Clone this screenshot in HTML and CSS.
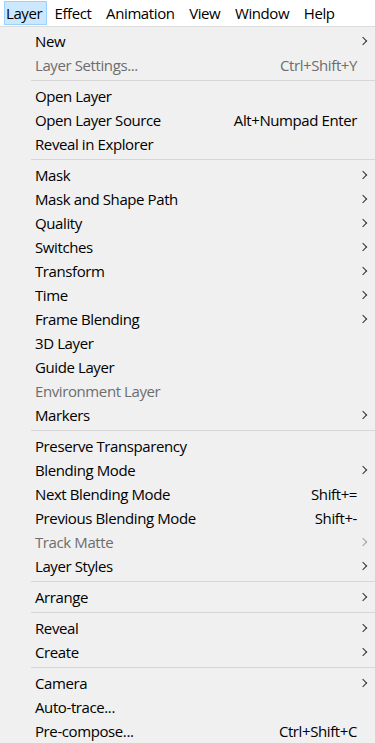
FILE: index.html
```html
<!DOCTYPE html>
<html>
<head>
<meta charset="utf-8">
<link rel="stylesheet" href="styles.css">
</head>
<body>
<div class="menubar">
  <span class="top active">Layer</span>
  <span class="top">Effect</span>
  <span class="top">Animation</span>
  <span class="top">View</span>
  <span class="top">Window</span>
  <span class="top">Help</span>
</div>
<div class="menu">
  <div class="item"><span class="label">New</span><span class="arrow"></span></div>
  <div class="item disabled"><span class="label">Layer Settings...</span><span class="key">Ctrl+Shift+Y</span></div>
  <div class="sep"></div>
  <div class="item"><span class="label">Open Layer</span></div>
  <div class="item"><span class="label">Open Layer Source</span><span class="key">Alt+Numpad Enter</span></div>
  <div class="item"><span class="label">Reveal in Explorer</span></div>
  <div class="sep"></div>
  <div class="item"><span class="label">Mask</span><span class="arrow"></span></div>
  <div class="item"><span class="label">Mask and Shape Path</span><span class="arrow"></span></div>
  <div class="item"><span class="label">Quality</span><span class="arrow"></span></div>
  <div class="item"><span class="label">Switches</span><span class="arrow"></span></div>
  <div class="item"><span class="label">Transform</span><span class="arrow"></span></div>
  <div class="item"><span class="label">Time</span><span class="arrow"></span></div>
  <div class="item"><span class="label">Frame Blending</span><span class="arrow"></span></div>
  <div class="item"><span class="label">3D Layer</span></div>
  <div class="item"><span class="label">Guide Layer</span></div>
  <div class="item disabled"><span class="label">Environment Layer</span></div>
  <div class="item"><span class="label">Markers</span><span class="arrow"></span></div>
  <div class="sep"></div>
  <div class="item"><span class="label">Preserve Transparency</span></div>
  <div class="item"><span class="label">Blending Mode</span><span class="arrow"></span></div>
  <div class="item"><span class="label">Next Blending Mode</span><span class="key">Shift+=</span></div>
  <div class="item"><span class="label">Previous Blending Mode</span><span class="key">Shift+-</span></div>
  <div class="item disabled"><span class="label">Track Matte</span><span class="arrow"></span></div>
  <div class="item"><span class="label">Layer Styles</span><span class="arrow"></span></div>
  <div class="sep"></div>
  <div class="item"><span class="label">Arrange</span><span class="arrow"></span></div>
  <div class="sep"></div>
  <div class="item"><span class="label">Reveal</span><span class="arrow"></span></div>
  <div class="item"><span class="label">Create</span><span class="arrow"></span></div>
  <div class="sep"></div>
  <div class="item"><span class="label">Camera</span><span class="arrow"></span></div>
  <div class="item"><span class="label">Auto-trace...</span></div>
  <div class="item"><span class="label">Pre-compose...</span><span class="key">Ctrl+Shift+C</span></div>
</div>
</body>
</html>
```
FILE: styles.css
```css
html, body {
  margin: 0;
  padding: 0;
  background: #f0f0f0;
  font-family: "Open Sans", "Noto Sans", sans-serif;
  font-size: 15px;
  letter-spacing: -0.4px;
  color: #000;
  overflow: hidden;
}
.menubar {
  display: flex;
  height: 26px;
  background: #fff;
  padding: 1px 0 1px 4px;
  box-sizing: border-box;
  align-items: stretch;
}
.top {
  display: flex;
  align-items: center;
  padding: 0 7.3px;
  white-space: nowrap;
}
.top.active {
  background: #cce8ff;
  border: 1px solid #99d1ff;
  padding: 0 4px 0 1px;
}
.menu {
  border-top: 1px solid #dcdcdc;
  padding-top: 2px;
  background: #f0f0f0;
}
.item {
  display: flex;
  align-items: center;
  height: 24px;
  padding-left: 35px;
  padding-right: 18px;
  white-space: nowrap;
  position: relative;
}
.label {
  flex: 1;
}
.key {
  text-align: right;
}
.disabled {
  color: #6d6d6d;
}
.arrow {
  position: absolute;
  right: 9px;
  top: 9px;
  width: 5px;
  height: 5px;
  border-right: 1px solid #333;
  border-top: 1px solid #333;
  transform: rotate(45deg);
}
.disabled .arrow {
  border-color: #a0a0a0;
}
.sep {
  height: 1px;
  margin: 3px 0 3px 31px;
  background: #d7d7d7;
}
```
